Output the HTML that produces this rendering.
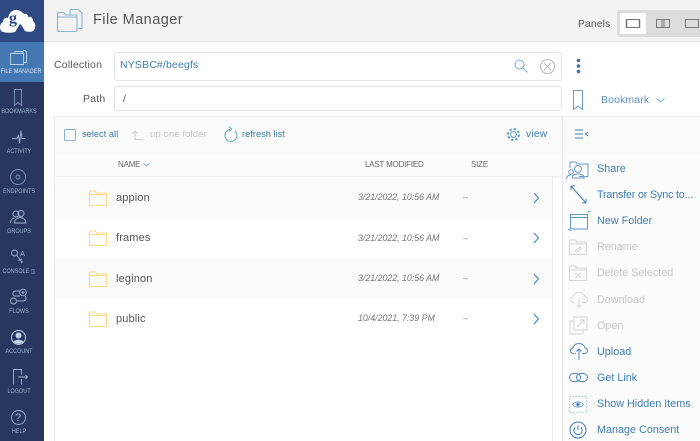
<!DOCTYPE html>
<html><head><meta charset="utf-8">
<style>
html,body{margin:0;padding:0;width:700px;height:441px;overflow:hidden;background:#fff}
body{font-family:"Liberation Sans",sans-serif;position:relative;filter:blur(.3px)}
.a{position:absolute;white-space:nowrap}
.nav{position:absolute;left:-3.5px;width:44px;text-align:center;color:#9fb5d4;font-size:6.6px;white-space:nowrap;line-height:8px;transform:scaleX(.83)}
.b{color:#3f7cb3}
.g{color:#c4c4c4}
.m{position:absolute;left:597px;font-size:10.8px;line-height:14px;white-space:nowrap}
.row{position:absolute;left:55px;width:497px;height:41px}
.fn{position:absolute;left:116px;font-size:11px;color:#555;line-height:14px;letter-spacing:.15px}
.dt{position:absolute;left:358px;font-size:8.8px;font-style:italic;color:#777;line-height:12px;white-space:nowrap}
.dash{position:absolute;left:463px;font-size:9px;color:#888;line-height:12px}
.th{position:absolute;top:160px;font-size:8px;line-height:10px;color:#666;letter-spacing:-.2px;white-space:nowrap}
svg{position:absolute;overflow:visible;fill:none}
</style></head><body>

<!-- sidebar -->
<div class="a" style="left:0;top:0;width:44px;height:441px;background:#27375f"></div>
<div class="a" style="left:0;top:0;width:44px;height:42px;background:#2f4a83"></div>
<div class="a" style="left:0;top:42px;width:44px;height:40px;background:#4378b2"></div>

<svg style="left:0;top:0" width="44" height="42"><path d="M3 32c-4-1-4-8 0-10 0-3 2-5 5-4 1-5 4-8 8-8 4 0 6 2 8 4 3-1 4 1 4 3 3-1 5 1 5 4 3 2 3 8 0 10-2 1-5 1-8 0-2-3-3-6-5-7l-5 8c-4 1-8 1-12 0z" fill="#fff"/><text x="9" y="23" font-size="16" font-weight="bold" fill="#2f4a83" font-family="Liberation Serif">g</text></svg>

<svg style="left:10px;top:50px" width="17" height="15" stroke="#bcd0e6" stroke-width=".9"><path d="M.5 3.500h13v11H.5zM5 3.500V1.500h8v2M13 .5h2l1.500 1.500v10.500H14"/></svg>
<div class="nav" style="top:68px;color:#dbe6f2">FILE MANAGER</div>

<svg style="left:14px;top:89px" width="8" height="17" stroke="#7f98bd" stroke-width=".9"><path d="M.5.500h7v16l-3.500-3-3.500 3z"/></svg>
<div class="nav" style="top:108px">BOOKMARKS</div>

<svg style="left:12px;top:130px" width="14" height="15" stroke="#9fb5d4" stroke-width=".9"><path d="M0 8.500h5l1.500-3 1 8 1.500-13 1 8h3.500"/></svg>
<div class="nav" style="top:148px">ACTIVITY</div>

<svg style="left:10px;top:169px" width="16" height="16" stroke="#7f98bd" stroke-width=".9"><circle cx="8" cy="8" r="7.500"/><circle cx="8" cy="8" r="2"/></svg>
<div class="nav" style="top:188px">ENDPOINTS</div>

<svg style="left:10px;top:210px" width="17" height="13" stroke="#9fb5d4" stroke-width=".9"><circle cx="6" cy="4" r="3"/><circle cx="11" cy="3.500" r="3"/><path d="M.5 13c0-3 2-5 4-5M9 7.500c4 0 7 2 7 5.500H4.500c0-3 2-5 4.500-5"/></svg>
<div class="nav" style="top:228px">GROUPS</div>

<svg style="left:10px;top:249px" width="16" height="17" stroke="#9fb5d4" stroke-width=".9"><circle cx="4.500" cy="4" r="3"/><path d="M7 6.500l5 7M8 12l4-2M11 14l2-1.500"/></svg>
<div class="a" style="left:20px;top:249px;font-size:7.500px;color:#9fb5d4">A</div>
<div class="nav" style="top:268px;left:-3px">CONSOLE <span style="font-size:6px">◫</span></div>

<svg style="left:10px;top:289px" width="18" height="16" stroke="#9fb5d4" stroke-width=".9"><circle cx="13" cy="3.500" r="3.300"/><circle cx="3.500" cy="12" r="3"/><path d="M10 7H5c-3 0-3-5 1-5h4M7 12h6c3 0 4-3 2-5"/><path d="M11.500 3.500h3M13 2v3"/></svg>
<div class="nav" style="top:308px">FLOWS</div>

<svg style="left:11px;top:330px" width="16" height="16"><circle cx="7.500" cy="7.500" r="7" stroke="#bcd0e6"/><circle cx="7.500" cy="5.500" r="3" fill="#bcd0e6"/><path d="M2.500 12c1-3 9-3 10 0-3 2.500-7 2.500-10 0z" fill="#bcd0e6"/></svg>
<div class="nav" style="top:348px">ACCOUNT</div>

<svg style="left:13px;top:369px" width="15" height="16" stroke="#9fb5d4" stroke-width=".9"><path d="M.5 15.500V.5h8v5M8.500 10v5.500M5 8h9.500M12.500 6l2 2-2 2"/></svg>
<div class="nav" style="top:388px">LOGOUT</div>

<svg style="left:11px;top:410px" width="16" height="16" stroke="#9fb5d4" stroke-width=".9"><circle cx="7.500" cy="7.500" r="7"/></svg>
<div class="a" style="left:15px;top:411px;font-size:11px;color:#9fb5d4;line-height:14px">?</div>
<div class="nav" style="top:428px">HELP</div>

<!-- header -->
<div class="a" style="left:44px;top:0;width:656px;height:41px;background:#f3f3f3;border-bottom:1px solid #e2e2e2"></div>
<svg style="left:57px;top:9px" width="26" height="23" stroke="#8db2d6" stroke-width="1.100"><path d="M.5 6.500V4.500c0-.6.400-1 1-1h5.500l1.500 2.500h10.500c.6 0 1 .4 1 1V21.500c0 .6-.4 1-1 1H1.500c-.6 0-1-.4-1-1zM.5 8h20M13 .5h8.500l3.500 3.500V19.500h-4M13 .5V6"/></svg>
<div class="a" style="left:93px;top:11px;font-size:14.500px;line-height:18px;color:#555;letter-spacing:.45px">File Manager</div>

<div class="a" style="left:578px;top:18px;font-size:10.300px;line-height:13px;color:#555;letter-spacing:.15px">Panels</div>
<div class="a" style="left:617px;top:10px;width:83px;height:27px;background:#dcdcdc;border-radius:3px 0 0 3px"></div>
<div class="a" style="left:620px;top:13px;width:26px;height:21px;background:#fff;border-radius:2px"></div>
<svg style="left:626px;top:19px" width="74" height="10" stroke="#777" stroke-width="1"><path d="M.5.500h13v8H.5z"/><path d="M.5 0v9M13.500 0v9" stroke-width="1.500"/><path d="M30.500.5h13v8h-13zM36 0v9M38 0v9"/><path d="M59.500.5h13v8h-13z"/></svg>

<!-- form -->
<div class="a" style="left:54px;top:58px;font-size:10.500px;line-height:14px;color:#555;letter-spacing:.2px">Collection</div>
<div class="a" style="left:83px;top:92px;font-size:10.500px;line-height:14px;color:#555;letter-spacing:.2px">Path</div>
<div class="a" style="left:114px;top:52px;width:446px;height:27px;border:1px solid #e3e3e3;border-radius:3px"></div>
<div class="a" style="left:114px;top:86px;width:446px;height:23px;border:1px solid #e3e3e3;border-radius:3px"></div>
<div class="a b" style="left:120px;top:58px;font-size:10.500px;line-height:14px;letter-spacing:.15px">NYSBC#/beegfs</div>
<div class="a" style="left:123px;top:92px;font-size:10.500px;line-height:14px;color:#555">/</div>
<svg style="left:514px;top:59px" width="14" height="14" stroke="#7aa6cf" stroke-width="1"><circle cx="5.500" cy="5.500" r="4.500"/><path d="M9 9l4.500 4.500"/></svg>
<svg style="left:540px;top:59px" width="16" height="16" stroke="#a5a5a5" stroke-width=".8"><circle cx="7.500" cy="7.500" r="7"/><path d="M4 4l7 7M11 4l-7 7"/></svg>
<svg style="left:576px;top:58px" width="6" height="17"><circle cx="2.500" cy="2.500" r="1.800" fill="#3d75ad"/><circle cx="2.500" cy="8" r="1.800" fill="#3d75ad"/><circle cx="2.500" cy="13.500" r="1.800" fill="#3d75ad"/></svg>
<svg style="left:573px;top:90px" width="11" height="21" stroke="#6b9ecb" stroke-width="1"><path d="M.5.500h9v19l-4.500-3.500-4.500 3.500z"/></svg>
<div class="a" style="left:601px;top:93px;font-size:10.500px;line-height:14px;color:#5a8fbe;letter-spacing:.12px">Bookmark</div>
<svg style="left:656px;top:98px" width="9" height="5" stroke="#7aa6cf"><path d="M.5.500l4 3.500 4-3.500"/></svg>

<!-- main panel -->
<div class="a" style="left:54px;top:116px;width:646px;height:36px;background:#fafafa;border-top:1px solid #ececec;border-bottom:1px solid #ececec"></div>
<div class="a" style="left:54px;top:153px;width:508px;height:23px;background:#fcfcfc;border-bottom:2px solid #efefef"></div>
<div class="a" style="left:54px;top:116px;width:1px;height:325px;background:#e8e8e8"></div>
<div class="a" style="left:562px;top:116px;width:1px;height:325px;background:#e9e9e9"></div>
<div class="a" style="left:552px;top:178px;width:1px;height:263px;background:#ececec"></div>
<div class="a" style="left:563px;top:153px;width:137px;height:288px;background:#fcfcfc"></div>

<div class="a" style="left:64px;top:129px;width:10px;height:10px;border:1px solid #8db2d6;border-radius:1px"></div>
<div class="a b" style="left:82px;top:128px;font-size:9.300px;line-height:12px">select all</div>
<svg style="left:132px;top:130px" width="11" height="10" stroke="#cfcfcf"><path d="M3 9.500V1M.5 3.500L3 1l2.500 2.500M3 9.500h8"/></svg>
<div class="a g" style="left:150px;top:129px;font-size:9.500px;line-height:12px;letter-spacing:.1px">up one folder</div>
<svg style="left:224px;top:126px" width="14" height="17" stroke="#6b9ecb"><path d="M6 3.500a6 6 0 1 0 5 1.500M5 .5l2.500 2.500-2 2"/></svg>
<div class="a b" style="left:242px;top:128px;font-size:9.300px;line-height:12px">refresh list</div>
<svg style="left:506px;top:127px" width="15" height="15" stroke="#6b9ecb"><circle cx="7.500" cy="7.500" r="3"/><circle cx="7.500" cy="7.500" r="5.500" stroke-dasharray="2.500 1.800" stroke-width="2"/></svg>
<div class="a b" style="left:526px;top:128px;font-size:10.300px;line-height:13px;letter-spacing:.2px">view</div>
<svg style="left:575px;top:129px" width="15" height="11" stroke="#3f7cb3" stroke-width="1"><path d="M0 1h8M0 5h8M0 9h8M13 3l-2.500 2 2.500 2"/></svg>

<!-- table head -->
<div class="th" style="left:118px">NAME</div>
<svg style="left:143px;top:163px" width="7" height="4" stroke="#7aa6cf"><path d="M.5.500l3 2.500 3-2.500"/></svg>
<div class="th" style="left:365px">LAST MODIFIED</div>
<div class="th" style="left:471px">SIZE</div>

<!-- rows -->
<div class="row" style="top:177px;background:#fafafa"></div>
<div class="row" style="top:258px;background:#fafafa"></div>

<svg style="left:89px;top:190px" width="18" height="16" stroke="#fbd98a"><path d="M.5 3V1h6l1 2h10v12.500H.5zM.5 4.500h17"/></svg>
<svg style="left:89px;top:230px" width="18" height="16" stroke="#fbd98a"><path d="M.5 3V1h6l1 2h10v12.500H.5zM.5 4.500h17"/></svg>
<svg style="left:89px;top:271px" width="18" height="16" stroke="#fbd98a"><path d="M.5 3V1h6l1 2h10v12.500H.5zM.5 4.500h17"/></svg>
<svg style="left:89px;top:311px" width="18" height="16" stroke="#fbd98a"><path d="M.5 3V1h6l1 2h10v12.500H.5zM.5 4.500h17"/></svg>

<div class="fn" style="top:191px">appion</div>
<div class="fn" style="top:231px">frames</div>
<div class="fn" style="top:272px">leginon</div>
<div class="fn" style="top:312px">public</div>

<div class="dt" style="top:191px">3/21/2022, 10:56 AM</div>
<div class="dt" style="top:232px">3/21/2022, 10:56 AM</div>
<div class="dt" style="top:272px">3/21/2022, 10:56 AM</div>
<div class="dt" style="top:312px">10/4/2021, 7:39 PM</div>

<div class="dash" style="top:191px">–</div>
<div class="dash" style="top:232px">–</div>
<div class="dash" style="top:272px">–</div>
<div class="dash" style="top:312px">–</div>

<svg style="left:533px;top:192px" width="7" height="12" stroke="#4f87bb" stroke-width="1.200"><path d="M1 1l4.500 5L1 11"/></svg>
<svg style="left:533px;top:232px" width="7" height="12" stroke="#4f87bb" stroke-width="1.200"><path d="M1 1l4.500 5L1 11"/></svg>
<svg style="left:533px;top:273px" width="7" height="12" stroke="#4f87bb" stroke-width="1.200"><path d="M1 1l4.500 5L1 11"/></svg>
<svg style="left:533px;top:313px" width="7" height="12" stroke="#4f87bb" stroke-width="1.200"><path d="M1 1l4.500 5L1 11"/></svg>

<!-- actions -->
<div class="m b" style="top:162px">Share</div>
<div class="m b" style="top:188px;letter-spacing:-.2px">Transfer or Sync to...</div>
<div class="m b" style="top:214px">New Folder</div>
<div class="m g" style="top:240px">Rename</div>
<div class="m g" style="top:266px">Delete Selected</div>
<div class="m g" style="top:293px">Download</div>
<div class="m g" style="top:319px">Open</div>
<div class="m b" style="top:345px">Upload</div>
<div class="m b" style="top:371px">Get Link</div>
<div class="m b" style="top:397px">Show Hidden Items</div>
<div class="m b" style="top:423px">Manage Consent</div>

<svg style="left:566px;top:160px" width="24" height="20" stroke="#6b9ecb"><path d="M4 8V2h6l1 2h11v12.500H13"/><circle cx="12" cy="9" r="3.500"/><path d="M6 18c0-3 3-4 6-4s6 1 6 4z"/><circle cx="5" cy="12" r="2.300"/><path d="M.5 19c0-3 2-4 4.500-4"/></svg>
<svg style="left:570px;top:185px" width="17" height="19" stroke="#3f7cb3"><path d="M1 1l15 17M1 1v4M1 1h4M16 18v-4M16 18h-4"/></svg>
<svg style="left:568px;top:211px" width="23" height="20" stroke="#5f97c9"><path d="M2.500 3.500h17V18h-17zM2.500 6.500h17M21 1l1.500-1M20 0v1.500M0 19l1.500-1M2.500 20v-1"/></svg>
<svg style="left:569px;top:239px" width="18" height="16" stroke="#d4d4d4"><path d="M.5 3V1h6l1 2h10v12.500H.5zM.5 5h17M6 12l5-4 1.500 1.500-5 4z"/></svg>
<svg style="left:569px;top:265px" width="18" height="16" stroke="#d4d4d4"><path d="M.5 3V1h6l1 2h10v12.500H.5zM.5 5h17M6 8l6 5M12 8l-6 5"/></svg>
<svg style="left:569px;top:291px" width="20" height="17" stroke="#d4d4d4"><path d="M5 11.500C1 11.500 0 7 4 6c1-6 11-6 12 0 4 1 3 5.500 0 5.500H13M10 7v9M7.500 14l2.500 2 2.500-2"/></svg>
<svg style="left:569px;top:316px" width="19" height="19" stroke="#d4d4d4"><path d="M5 1h13v13H5zM1 5h4M1 5v13h13v-4M8 11l7-7M11 4h4v4"/></svg>
<svg style="left:569px;top:342px" width="20" height="19" stroke="#4f87bb"><path d="M5 11.500C1 11.500 0 7 4 6c1-6 11-6 12 0 4 1 3 5.500 0 5.500H13M7 11.500h-1M10 18V7M7.500 9.500L10 7l2.500 2.500"/></svg>
<svg style="left:569px;top:372px" width="20" height="11" stroke="#4f87bb"><rect x=".5" y="1.500" width="11" height="8" rx="4"/><rect x="7.500" y="1.500" width="11" height="8" rx="4"/></svg>
<svg style="left:569px;top:396px" width="18" height="17" stroke="#8db2d6" stroke-width=".8"><rect x=".5" y=".5" width="17" height="16" stroke-dasharray="1.500 1.500"/><path d="M3.500 8.500c3-3.500 8-3.500 11 0-3 3.500-8 3.500-11 0z" stroke="#5f97c9"/><circle cx="9" cy="8.500" r="1.600" fill="#3f7cb3"/></svg>
<svg style="left:569px;top:421px" width="18" height="18" stroke="#3f7cb3"><circle cx="9" cy="9" r="8"/><path d="M9 4.500V9"/><path d="M6 6.500a4.200 4.200 0 1 0 6 0"/></svg>

</body></html>
